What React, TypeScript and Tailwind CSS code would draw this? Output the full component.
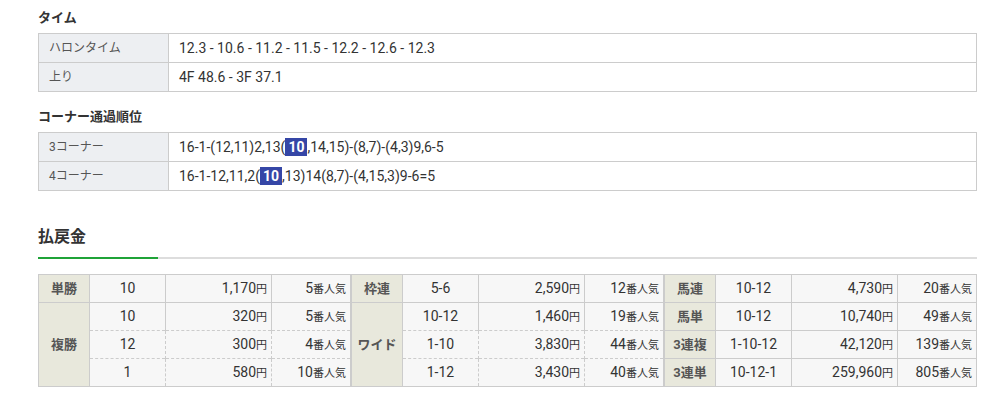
import React from 'react';

/**
 * Race result block: lap times, corner order and payouts.
 */

const FONT = { fontFamily: 'Roboto, "Noto Sans CJK JP", sans-serif' };

interface InfoRow {
  label: string;
  value: React.ReactNode;
}

interface PayoutLine {
  horse: string;
  yen: string;
  pop: string;
}

interface PayoutGroup {
  label: string;
  lines: PayoutLine[];
}

const Mark = ({ n }: { n: string }) => (
  <span className="inline-block bg-[#3546a6] px-[3px] font-bold leading-[18px] text-white">{n}</span>
);

const timeRows: InfoRow[] = [
  { label: 'ハロンタイム', value: '12.3 - 10.6 - 11.2 - 11.5 - 12.2 - 12.6 - 12.3' },
  { label: '上り', value: '4F 48.6 - 3F 37.1' },
];

const cornerRows: InfoRow[] = [
  {
    label: '3コーナー',
    value: (
      <>
        16-1-(12,11)2,13(<Mark n="10" />,14,15)-(8,7)-(4,3)9,6-5
      </>
    ),
  },
  {
    label: '4コーナー',
    value: (
      <>
        16-1-12,11,2(<Mark n="10" />,13)14(8,7)-(4,15,3)9-6=5
      </>
    ),
  },
];

// each column of the payout block is its own table
const payoutColumns: PayoutGroup[][] = [
  [
    { label: '単勝', lines: [{ horse: '10', yen: '1,170', pop: '5' }] },
    {
      label: '複勝',
      lines: [
        { horse: '10', yen: '320', pop: '5' },
        { horse: '12', yen: '300', pop: '4' },
        { horse: '1', yen: '580', pop: '10' },
      ],
    },
  ],
  [
    { label: '枠連', lines: [{ horse: '5-6', yen: '2,590', pop: '12' }] },
    {
      label: 'ワイド',
      lines: [
        { horse: '10-12', yen: '1,460', pop: '19' },
        { horse: '1-10', yen: '3,830', pop: '44' },
        { horse: '1-12', yen: '3,430', pop: '40' },
      ],
    },
  ],
  [
    { label: '馬連', lines: [{ horse: '10-12', yen: '4,730', pop: '20' }] },
    { label: '馬単', lines: [{ horse: '10-12', yen: '10,740', pop: '49' }] },
    { label: '3連複', lines: [{ horse: '1-10-12', yen: '42,120', pop: '139' }] },
    { label: '3連単', lines: [{ horse: '10-12-1', yen: '259,960', pop: '805' }] },
  ],
];

function InfoTable({ rows }: { rows: InfoRow[] }) {
  return (
    <table className="w-full border-collapse border border-[#cccccc]">
      <tbody>
        {rows.map(row => (
          <tr key={row.label} className="h-[29px]">
            <th className="w-[130px] border border-[#cccccc] bg-[#edeff2] pl-[10px] text-left text-[12px] font-normal text-[#555555]">
              {row.label}
            </th>
            <td className="border border-[#cccccc] pl-[10px] text-[14px] text-[#333333]">
              {row.value}
            </td>
          </tr>
        ))}
      </tbody>
    </table>
  );
}

function PayoutTable({ groups }: { groups: PayoutGroup[] }) {
  return (
    <table className="w-full table-fixed border-collapse border border-[#cccccc] bg-[#f7f7f7]">
      <colgroup>
        <col className="w-[51px]" />
        <col className="w-[76px]" />
        <col className="w-[106px]" />
        <col />
      </colgroup>
      <tbody>
        {groups.map(group =>
          group.lines.map((line, i) => {
            const sub = i > 0;
            const lineBorder = sub ? 'border-t border-dashed border-t-[#cccccc]' : 'border-t border-[#cccccc]';
            return (
              <tr key={group.label + i} className="h-[28px]">
                {i === 0 && (
                  <th
                    rowSpan={group.lines.length}
                    className="border border-[#cccccc] bg-[#e8e8dc] text-center text-[13px] font-bold text-[#555555]"
                  >
                    {group.label}
                  </th>
                )}
                <td className={`${lineBorder} border-r border-r-[#cccccc] text-center text-[14px] text-[#333333]`}>
                  {line.horse}
                </td>
                <td className={`${lineBorder} border-r border-r-[#cccccc] pr-[4px] text-right text-[14px] text-[#333333]`}>
                  {line.yen}
                  <span className="text-[11px]">円</span>
                </td>
                <td className={`${lineBorder} pr-[4px] text-right text-[14px] text-[#333333]`}>
                  {line.pop}
                  <span className="text-[11px]">番人気</span>
                </td>
              </tr>
            );
          })
        )}
      </tbody>
    </table>
  );
}

export default function App() {
  return (
    <div className="min-h-[400px] bg-white" style={FONT}>
      <div className="ml-[38px] w-[939px] pt-[8px]">
        {/* Times */}
        <h3 className="text-[13px] font-bold leading-[20px] text-[#333333]">タイム</h3>
        <div className="mt-[5px]">
          <InfoTable rows={timeRows} />
        </div>

        {/* Corner order */}
        <h3 className="mt-[15px] text-[13px] font-bold leading-[20px] text-[#333333]">コーナー通過順位</h3>
        <div className="mt-[5px]">
          <InfoTable rows={cornerRows} />
        </div>

        {/* Payouts */}
        <h2 className="mt-[34px] text-[16px] font-bold leading-[24px] text-[#333333]">払戻金</h2>
        <div className="mt-[8px] h-[2px] bg-[#dddddd]">
          <div className="h-full w-[120px] bg-[#1fa338]" />
        </div>
        <div className="mt-[15px] flex">
          {payoutColumns.map((groups, i) => (
            <div key={i} className="flex-1">
              <PayoutTable groups={groups} />
            </div>
          ))}
        </div>
      </div>
    </div>
  );
}
